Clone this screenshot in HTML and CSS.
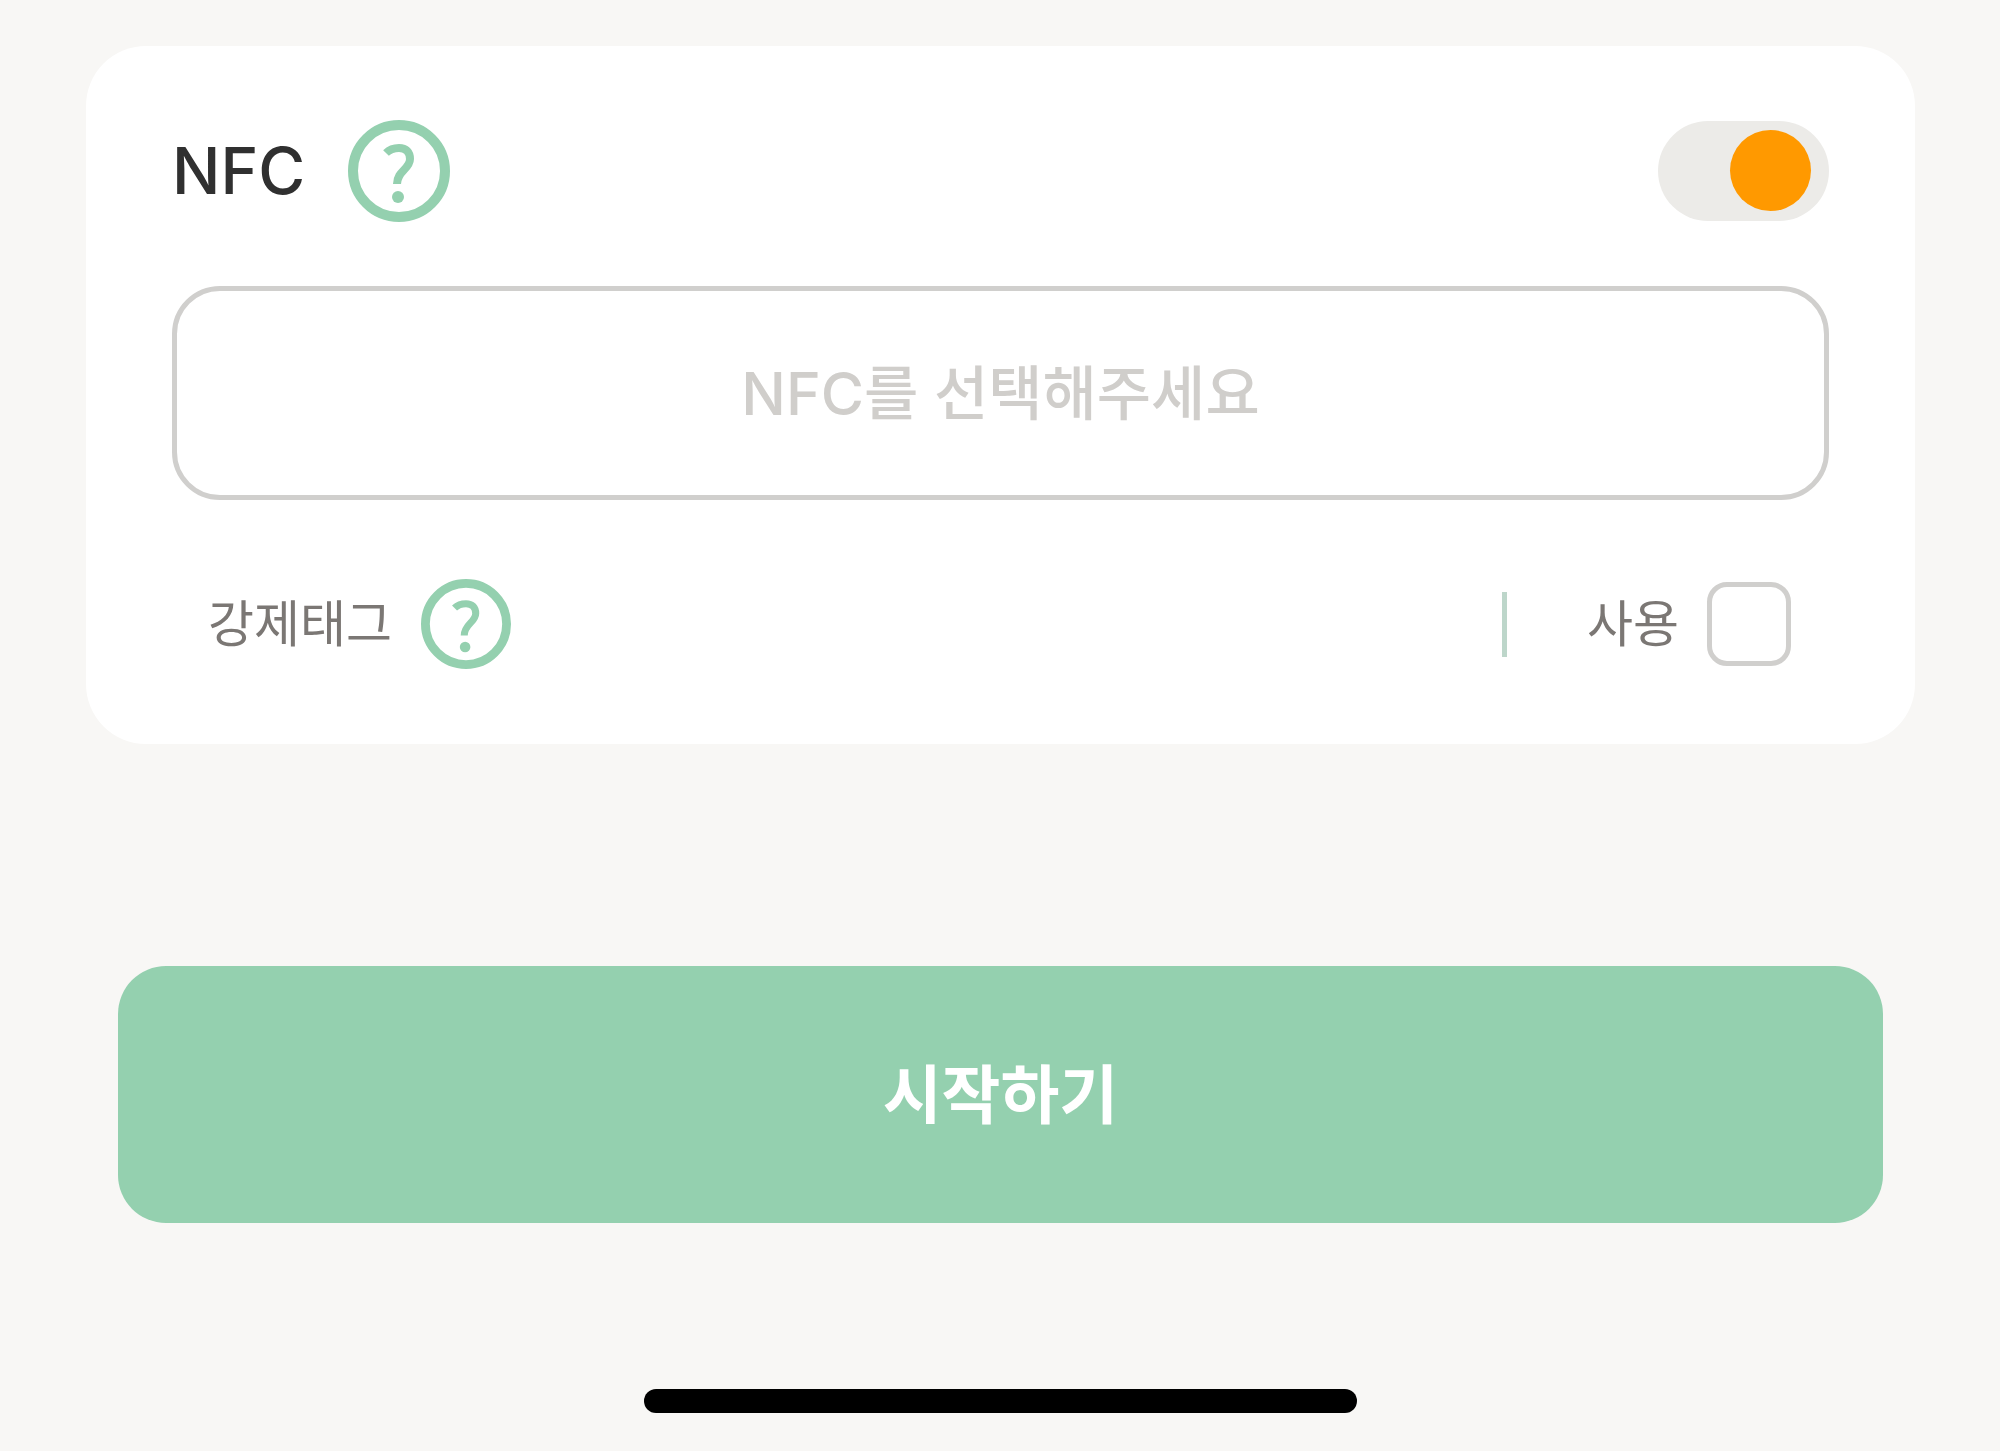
FILE: index.html
```html
<!DOCTYPE html>
<html lang="ko">
<head>
    <meta charset="UTF-8">
    <meta name="viewport" content="width=device-width, initial-scale=1.0">
    <title>NFC</title>
    <link rel="stylesheet" href="styles.css">
</head>
<body>
    <main class="page">
        <section class="card">
            <div class="row">
                <label class="title" for="nfc-switch">NFC</label>
                <button class="help" type="button">
                    <svg viewBox="0 0 102 102" fill="none" stroke="currentColor">
                        <circle cx="51" cy="51" r="46" stroke-width="10"/>
                        <path d="M38 33C42 29 46 28 51 28C58 28 62 32 62 39C62 49 49 51 49 64" stroke-width="8"/>
                        <circle cx="50" cy="77" r="6" fill="currentColor" stroke="none"/>
                    </svg>
                </button>
                <input class="switch" id="nfc-switch" type="checkbox" role="switch" checked>
            </div>

            <input class="picker" type="text" placeholder="NFC를 선택해주세요" readonly>

            <div class="row sub-row">
                <span>강제태그</span>
                <button class="help help-small" type="button">
                    <svg viewBox="0 0 102 102" fill="none" stroke="currentColor">
                        <circle cx="51" cy="51" r="46" stroke-width="10"/>
                        <path d="M38 33C42 29 46 28 51 28C58 28 62 32 62 39C62 49 49 51 49 64" stroke-width="8"/>
                        <circle cx="50" cy="77" r="6" fill="currentColor" stroke="none"/>
                    </svg>
                </button>
                <span class="divider"></span>
                <label for="force-tag">사용</label>
                <input class="checkbox" id="force-tag" type="checkbox">
            </div>
        </section>

        <button class="start-button" type="button">시작하기</button>

        <div class="home-indicator"></div>
    </main>
</body>
</html>
```

FILE: styles.css
```css
* {
    box-sizing: border-box;
}
body {
    margin: 0;
    background: #f8f7f5;
    font-family: Inter, "Noto Sans CJK KR", sans-serif;
}
.page {
    display: flex;
    flex-direction: column;
    min-height: 100vh;
    padding: 46px 85px 38px 86px;
}
.card {
    display: flex;
    flex-direction: column;
    padding: 74px 86px 75px;
    border-radius: 60px;
    background: #fff;
}
.row {
    display: flex;
    align-items: center;
}
.title {
    color: #303030;
    font-size: 64px;
    font-weight: 500;
    line-height: 100px;
}
.help {
    width: 102px;
    height: 102px;
    margin-left: 43px;
    padding: 0;
    border: none;
    background: none;
    color: #94d0af;
    cursor: pointer;
}
.help svg {
    display: block;
    width: 100%;
    height: 100%;
}
.help-small {
    width: 90px;
    height: 90px;
    margin-left: 29px;
}
.switch {
    appearance: none;
    display: flex;
    width: 171px;
    height: 100px;
    margin: 0 0 0 auto;
    padding: 9px 18px;
    border-radius: 50px;
    background: #ecebe8;
    cursor: pointer;
}
.switch::before {
    content: "";
    width: 81px;
    height: 81px;
    border-radius: 50%;
    background: #bbb;
}
.switch:checked::before {
    margin-left: auto;
    background: #ff9900;
}
.picker {
    width: 100%;
    height: 214px;
    margin: 64px 0 79px;
    border: 5px solid #d0cfcd;
    border-radius: 48px;
    background: #fff;
    font-family: inherit;
    font-size: 59px;
    font-weight: 500;
    text-align: center;
}
.picker::placeholder {
    color: #d0cecb;
    opacity: 1;
}
.sub-row {
    padding: 0 38px 0 36px;
    color: #7b7774;
    font-size: 50px;
    line-height: 72px;
}
.divider {
    width: 5px;
    height: 65px;
    margin: 0 80px 0 auto;
    background: #bdd6ca;
}
.checkbox {
    appearance: none;
    width: 84px;
    height: 84px;
    margin: 0 0 0 28px;
    border: 5px solid #d0cfcd;
    border-radius: 20px;
    background: #fff;
    cursor: pointer;
}
.start-button {
    height: 257px;
    margin: 222px 32px 0;
    padding: 0 0 10px;
    border: none;
    border-radius: 48px;
    background: #94d0af;
    color: #fff;
    font-family: inherit;
    font-size: 64px;
    font-weight: 700;
    cursor: pointer;
}
.home-indicator {
    width: 39%;
    height: 24px;
    margin: auto auto 0;
    border-radius: 12px;
    background: #000;
}
```
